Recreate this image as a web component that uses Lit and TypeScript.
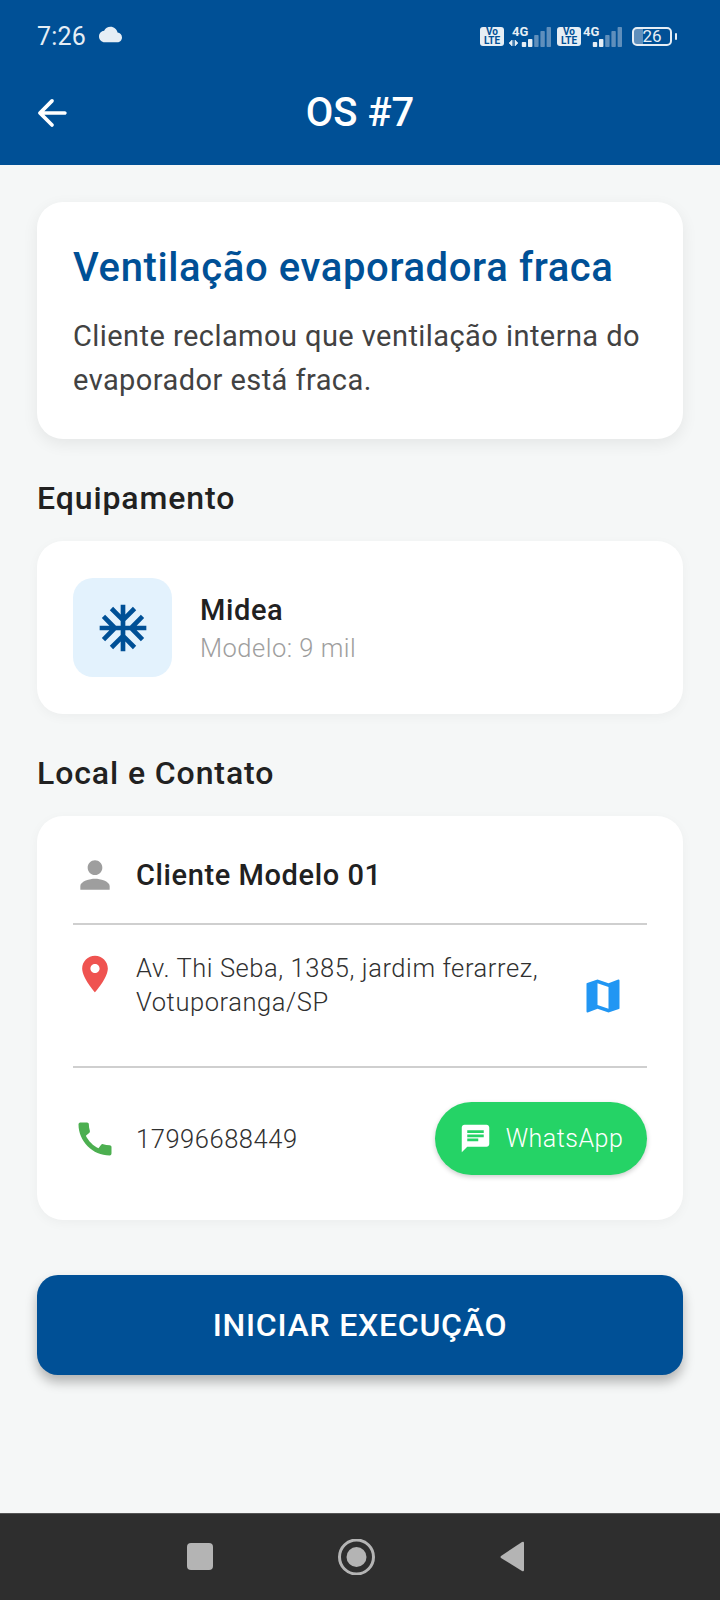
import { LitElement, html, css, svg } from "lit";
import { customElement } from "lit/decorators.js";

const ICONS = {
  back: "M19 11H7.83l4.88-4.88c.39-.39.39-1.03 0-1.42-.39-.39-1.02-.39-1.41 0l-6.59 6.59c-.39.39-.39 1.02 0 1.41l6.59 6.59c.39.39 1.02.39 1.41 0 .39-.39.39-1.02 0-1.41L7.83 13H19c.55 0 1-.45 1-1s-.45-1-1-1z",
  cloud: "M19.35 10.04C18.67 6.59 15.64 4 12 4 9.11 4 6.6 5.64 5.35 8.04 2.34 8.36 0 10.91 0 14c0 3.31 2.69 6 6 6h13c2.76 0 5-2.24 5-5 0-2.64-2.05-4.78-4.65-4.96z",
  snow: "M22 11h-4.17l3.24-3.24-1.41-1.42L15 11h-2V9l4.66-4.66-1.42-1.41L13 6.17V2h-2v4.17L7.76 2.93 6.34 4.34 11 9v2H9L4.34 6.34 2.93 7.76 6.17 11H2v2h4.17l-3.24 3.24 1.41 1.42L9 13h2v2l-4.66 4.66 1.42 1.41L11 17.83V22h2v-4.17l3.24 3.24 1.42-1.41L13 15v-2h2l4.66 4.66 1.41-1.42L17.83 13H22z",
  person: "M12 12c2.21 0 4-1.79 4-4s-1.79-4-4-4-4 1.79-4 4 1.79 4 4 4zm0 2c-2.67 0-8 1.34-8 4v2h16v-2c0-2.66-5.33-4-8-4z",
  pin: "M12 2C8.13 2 5 5.13 5 9c0 5.25 7 13 7 13s7-7.75 7-13c0-3.87-3.13-7-7-7zm0 9.5c-1.38 0-2.5-1.12-2.5-2.5s1.12-2.5 2.5-2.5 2.5 1.12 2.5 2.5-1.12 2.5-2.5 2.5z",
  map: "M20.5 3l-.16.03L15 5.1 9 3 3.36 4.9c-.21.07-.36.25-.36.48V20.5c0 .28.22.5.5.5l.16-.03L9 18.9l6 2.1 5.64-1.9c.21-.07.36-.25.36-.48V3.5c0-.28-.22-.5-.5-.5zM15 19l-6-2.11V5l6 2.11V19z",
  phone: "M20.01 15.38c-1.23 0-2.42-.2-3.53-.56-.35-.12-.74-.03-1.01.24l-1.57 1.97c-2.83-1.35-5.48-3.9-6.89-6.83l1.95-1.66c.27-.28.35-.67.24-1.02-.37-1.11-.56-2.3-.56-3.53 0-.54-.45-.99-.99-.99H4.19C3.65 3 3 3.24 3 3.99 3 13.28 10.73 21 20.01 21c.71 0 .99-.63.99-1.18v-3.45c0-.54-.45-.99-.99-.99z",
  chat: "M20 2H4c-1.1 0-1.99.9-1.99 2L2 22l4-4h14c1.1 0 2-.9 2-2V4c0-1.1-.9-2-2-2zM6 9h12v2H6V9zm8 5H6v-2h8v2zm4-6H6V6h12v2z",
};

@customElement("app-root")
export class AppRoot extends LitElement {
  static override styles = css`
    :host {
      display: block;
      font-family: Roboto, "Noto Sans", sans-serif;
      color: #212121;
    }
    .page {
      width: 720px;
      height: 1600px;
      display: flex;
      flex-direction: column;
      background: #f5f7f7;
    }
    svg {
      display: block;
      flex: none;
      fill: currentColor;
    }
    .header {
      height: 165px;
      flex: none;
      background: #005096;
      color: #fff;
      box-sizing: border-box;
    }
    .status {
      height: 73px;
      padding: 0 43px 0 37px;
      display: flex;
      align-items: center;
      color: #e6eef5;
    }
    .time {
      font-size: 25px;
      width: 62px;
      letter-spacing: 0.2px;
    }
    .cloud {
      margin-top: -4px;
    }
    .status-right {
      margin-left: auto;
      display: flex;
      align-items: center;
    }
    .volte {
      width: 24px;
      height: 19px;
      background: #e6eef5;
      color: #005096;
      border-radius: 3px;
      font-size: 10px;
      line-height: 9px;
      font-weight: 700;
      text-align: center;
      box-sizing: border-box;
    }
    .volte-second {
      margin-left: 6px;
    }
    .net {
      position: relative;
      margin-left: 5px;
    }
    .net-tight {
      margin-left: 2px;
    }
    .net span {
      position: absolute;
      top: -2px;
      left: 3px;
      font-size: 13px;
      line-height: 13px;
      font-weight: 700;
    }
    .net-tight span {
      left: 0;
    }
    .battery {
      margin-left: 10px;
      width: 40px;
      height: 19px;
      box-sizing: border-box;
      border: 2px solid #e6eef5;
      border-radius: 5px;
      font-size: 17px;
      line-height: 15px;
      text-align: center;
      background: linear-gradient(90deg, #5f8fbc 26%, transparent 26%);
    }
    .battery-nub {
      width: 2px;
      height: 7px;
      margin-left: 3px;
      background: #e6eef5;
      border-radius: 1px;
    }
    .bar {
      height: 84px;
      display: flex;
      align-items: center;
      justify-content: center;
      position: relative;
      margin-top: -3px;
    }
    .back {
      position: absolute;
      left: 30px;
      top: 21px;
    }
    .bar h1 {
      margin: 0;
      font-size: 40px;
      font-weight: 500;
    }
    .content {
      flex: 1;
      padding: 37px 37px 0 37px;
    }
    .card {
      background: #fff;
      border-radius: 26px;
      box-shadow: 0 3px 12px rgba(0, 0, 0, 0.04);
    }
    .summary {
      height: 237px;
      box-sizing: border-box;
      padding: 38px 36px 0;
      box-shadow: 0 5px 16px rgba(0, 0, 0, 0.07);
    }
    .summary h2 {
      margin: 0 0 18px;
      font-size: 40px;
      line-height: 56px;
      font-weight: 500;
      letter-spacing: 0.62px;
      color: #005096;
    }
    .summary p {
      margin: 0;
      font-size: 29px;
      line-height: 44px;
      letter-spacing: 0.44px;
      color: #424242;
    }
    h3 {
      margin: 37px 0 21px;
      font-size: 32px;
      line-height: 44px;
      font-weight: 500;
      letter-spacing: 0.9px;
      color: #212121;
    }
    .equip {
      height: 173px;
      box-sizing: border-box;
      padding: 0 36px;
      display: flex;
      align-items: center;
      gap: 28px;
    }
    .equip-icon {
      width: 99px;
      height: 99px;
      border-radius: 20px;
      background: #e3f2fd;
      color: #005096;
      display: flex;
      align-items: center;
      justify-content: center;
    }
    .equip-text {
      padding-top: 2px;
    }
    .equip-name {
      font-size: 29px;
      line-height: 38px;
      font-weight: 500;
      letter-spacing: 0.6px;
    }
    .equip-model {
      font-size: 25.5px;
      line-height: 38px;
      letter-spacing: 0.5px;
      color: #9e9e9e;
      font-weight: 300;
    }
    .contact {
      height: 404px;
      box-sizing: border-box;
      padding: 0 36px;
      display: flex;
      flex-direction: column;
    }
    .row {
      display: flex;
      align-items: center;
      gap: 19px;
    }
    .row-client {
      height: 107px;
      padding-top: 11px;
      box-sizing: border-box;
      color: #9e9e9e;
    }
    .client-name {
      font-size: 29px;
      font-weight: 500;
      letter-spacing: 0.6px;
      color: #212121;
    }
    hr {
      margin: 0;
      border: 0;
      height: 2px;
      flex: none;
      background: #cfcfcf;
    }
    .row-address {
      height: 141px;
      color: #ef5350;
      align-items: flex-start;
      padding-top: 27px;
      box-sizing: border-box;
    }
    .address {
      width: 424px;
      font-size: 25.5px;
      line-height: 33.5px;
      letter-spacing: 0.58px;
      color: #303030;
      font-weight: 300;
    }
    .map {
      color: #2196f3;
      margin: 22px 0 0 2px;
    }
    .row-phone {
      flex: 1;
      padding-bottom: 11px;
      color: #4caf50;
    }
    .phone {
      font-size: 25.5px;
      letter-spacing: 0.55px;
      color: #303030;
      font-weight: 300;
    }
    .whatsapp {
      margin-left: auto;
      width: 212px;
      height: 73px;
      border-radius: 37px;
      background: #25d366;
      color: #fff;
      box-shadow: 0 2px 5px rgba(0, 0, 0, 0.2);
      display: flex;
      align-items: center;
      justify-content: center;
      gap: 14px;
      font-size: 25px;
      font-weight: 300;
      letter-spacing: 0.5px;
    }
    .start {
      margin-top: 55px;
      height: 100px;
      border-radius: 21px;
      background: #005096;
      color: #fff;
      box-shadow: 0 7px 12px rgba(0, 0, 0, 0.28);
      display: flex;
      align-items: center;
      justify-content: center;
      font-size: 32px;
      font-weight: 500;
      letter-spacing: 0.76px;
    }
    .nav {
      height: 87px;
      flex: none;
      background: #2e2e2e;
      border-top: 1px solid #555;
      box-sizing: border-box;
      display: flex;
      align-items: center;
      color: #b4b4b4;
      padding-left: 187px;
    }
  `;

  icon(name: keyof typeof ICONS, size: number) {
    return html`<svg width=${size} height=${size} viewBox="0 0 24 24"><path d=${ICONS[name]}></path></svg>`;
  }

  // bright = how many of the five bars are lit
  signal(bright: number, arrows: boolean) {
    const heights = [5, 8, 12, 16, 20];
    const width = arrows ? 42 : 39;
    return html`<svg width=${width} height="20" viewBox="0 0 ${width} 20">
      ${arrows
        ? svg`<path d="M0 16l3-3v6zM4 13v6M6 13l3 3-3 3z" fill="#e6eef5" stroke="#e6eef5" stroke-width="0.6"></path>`
        : null}
      ${heights.map((h, i) => {
        const lit = i < bright;
        return svg`<rect x=${width - 29.2 + i * 6.2} y=${20 - h} width="4.4" height=${h} rx="0.8"
          fill=${lit ? "#e6eef5" : "#5f8fbc"}></rect>`;
      })}
    </svg>`;
  }

  override render() {
    return html`
      <div class="page">
        <div class="header">
          <div class="status">
            <div class="time">7:26</div>
            <div class="cloud">${this.icon("cloud", 23)}</div>
            <div class="status-right">
              <div class="volte">Vo<br />LTE</div>
              <div class="net"><span>4G</span>${this.signal(2, true)}</div>
              <div class="volte volte-second">Vo<br />LTE</div>
              <div class="net net-tight"><span>4G</span>${this.signal(2, false)}</div>
              <div class="battery">26</div>
              <div class="battery-nub"></div>
            </div>
          </div>
          <div class="bar">
            <div class="back">${this.icon("back", 44)}</div>
            <h1>OS #7</h1>
          </div>
        </div>

        <div class="content">
          <div class="card summary">
            <h2>Ventilação evaporadora fraca</h2>
            <p>Cliente reclamou que ventilação interna do evaporador está fraca.</p>
          </div>

          <h3>Equipamento</h3>
          <div class="card equip">
            <div class="equip-icon">${this.icon("snow", 56)}</div>
            <div class="equip-text">
              <div class="equip-name">Midea</div>
              <div class="equip-model">Modelo: 9 mil</div>
            </div>
          </div>

          <h3>Local e Contato</h3>
          <div class="card contact">
            <div class="row row-client">
              ${this.icon("person", 44)}
              <div class="client-name">Cliente Modelo 01</div>
            </div>
            <hr />
            <div class="row row-address">
              ${this.icon("pin", 44)}
              <div class="address">Av. Thi Seba, 1385, jardim ferarrez, Votuporanga/SP</div>
              <div class="map">${this.icon("map", 44)}</div>
            </div>
            <hr />
            <div class="row row-phone">
              ${this.icon("phone", 44)}
              <div class="phone">17996688449</div>
              <div class="whatsapp">${this.icon("chat", 33)}WhatsApp</div>
            </div>
          </div>

          <div class="start">INICIAR EXECUÇÃO</div>
        </div>

        <div class="nav">
          <svg width="340" height="36" viewBox="0 0 340 36">
            <rect x="0" y="4" width="26" height="27" rx="4"></rect>
            <circle cx="169.5" cy="18" r="17" fill="none" stroke="currentColor" stroke-width="3"></circle>
            <circle cx="169.5" cy="18" r="10"></circle>
            <path d="M337 4v27q0 2-2 1l-21-13q-1-1 0-2l21-14q2-1 2 1z"></path>
          </svg>
        </div>
      </div>
    `;
  }
}
